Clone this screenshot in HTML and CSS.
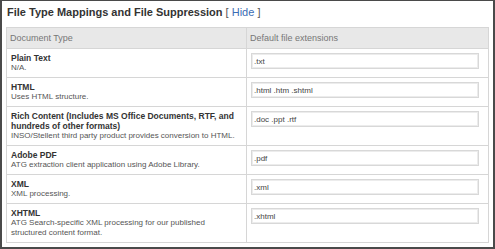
FILE: index.html
```html
<!DOCTYPE html>
<html>
<head>
<meta charset="utf-8">
<link rel="stylesheet" href="styles.css">
</head>
<body>
<div class="frame">
  <h2 class="title">File Type Mappings and File Suppression <span class="toggle">[ <a href="#">Hide</a> ]</span></h2>
  <table class="mappings">
    <colgroup><col class="c1"><col class="c2"></colgroup>
    <thead>
      <tr><th>Document Type</th><th>Default file extensions</th></tr>
    </thead>
    <tbody>
      <tr><td><div class="label">Plain Text</div><div class="desc">N/A.</div></td><td><input class="ext" type="text" value=".txt"></td></tr>
      <tr><td><div class="label">HTML</div><div class="desc">Uses HTML structure.</div></td><td><input class="ext" type="text" value=".html .htm .shtml"></td></tr>
      <tr><td><div class="label">Rich Content (Includes MS Office Documents, RTF, and hundreds of other formats)</div><div class="desc">INSO/Stellent third party product provides conversion to HTML.</div></td><td><input class="ext" type="text" value=".doc .ppt .rtf"></td></tr>
      <tr><td><div class="label">Adobe PDF</div><div class="desc">ATG extraction client application using Adobe Library.</div></td><td><input class="ext" type="text" value=".pdf"></td></tr>
      <tr><td><div class="label">XML</div><div class="desc">XML processing.</div></td><td><input class="ext" type="text" value=".xml"></td></tr>
      <tr><td><div class="label">XHTML</div><div class="desc">ATG Search-specific XML processing for our published structured content format.</div></td><td><input class="ext" type="text" value=".xhtml"></td></tr>
    </tbody>
  </table>
</div>
</body>
</html>
```

FILE: styles.css
```css
html, body {
  margin: 0;
  padding: 0;
  background: #ffffff;
}
body {
  font-family: "Liberation Sans", Arial, sans-serif;
  color: #333333;
}
.frame {
  box-sizing: border-box;
  width: 495px;
  height: 249px;
  border: 2px solid #4a4a4a;
  border-top-width: 1px;
  padding: 4px 0 0 4px;
  overflow: hidden;
}
.title {
  margin: 0 0 0 1px;
  font-size: 11px;
  line-height: 14px;
  font-weight: bold;
  color: #333333;
  height: 22px;
}
.toggle {
  font-weight: normal;
  color: #555555;
}
.toggle a {
  color: #3a6cb4;
  text-decoration: none;
}
.mappings {
  border-collapse: collapse;
  table-layout: fixed;
  width: 483px;
}
.c1 { width: 240px; }
.mappings th,
.mappings td {
  border: 1px solid #d6d6d6;
  text-align: left;
  vertical-align: top;
}
.mappings th {
  background: #e8e8e8;
  font-weight: normal;
  font-size: 9px;
  color: #777777;
  height: 21px;
  padding: 0 3px;
  vertical-align: middle;
  box-sizing: border-box;
}
.mappings td {
  padding: 4px 4px 4px 4px;
  font-size: 8px;
  line-height: 10px;
}
.label {
  font-weight: bold;
  font-size: 8.5px;
  line-height: 10px;
  color: #333333;
}
.desc {
  font-size: 8px;
  line-height: 10px;
  color: #555555;
}
.ext {
  display: block;
  box-sizing: border-box;
  width: 228px;
  height: 16px;
  margin: 0;
  padding: 0 0 0 2px;
  border: 1px solid #d8d8d8;
  box-shadow: inset 0 0 0 1px #ececec;
  font-family: "Liberation Sans", Arial, sans-serif;
  font-size: 8px;
  color: #444444;
  background: #ffffff;
}
```
